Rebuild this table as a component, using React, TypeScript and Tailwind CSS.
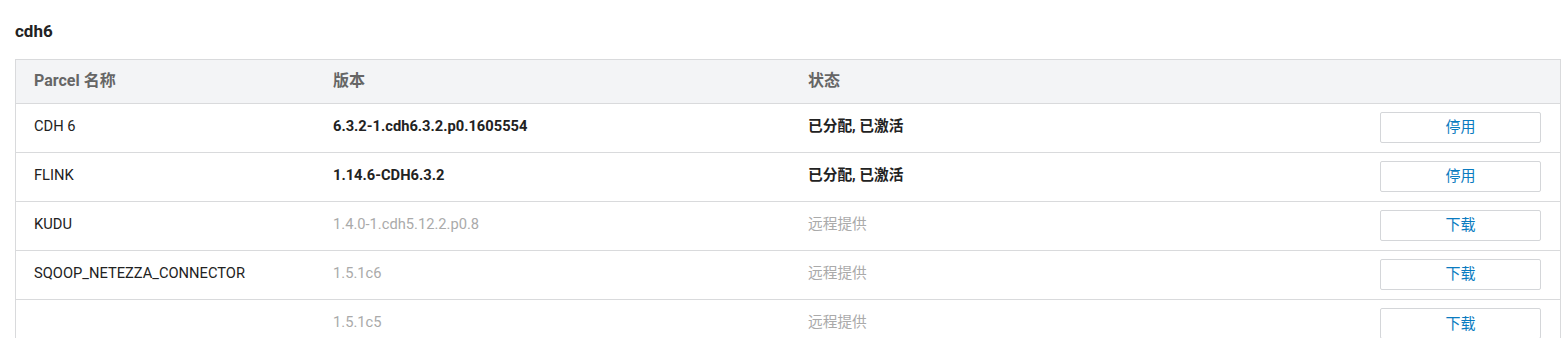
import React from 'react';

type Parcel = {
  name: string;
  version: string;
  status: string;
  active: boolean;
  action: string;
};

const parcels: Parcel[] = [
  { name: 'CDH 6', version: '6.3.2-1.cdh6.3.2.p0.1605554', status: '已分配, 已激活', active: true, action: '停用' },
  { name: 'FLINK', version: '1.14.6-CDH6.3.2', status: '已分配, 已激活', active: true, action: '停用' },
  { name: 'KUDU', version: '1.4.0-1.cdh5.12.2.p0.8', status: '远程提供', active: false, action: '下载' },
  { name: 'SQOOP_NETEZZA_CONNECTOR', version: '1.5.1c6', status: '远程提供', active: false, action: '下载' },
  { name: '', version: '1.5.1c5', status: '远程提供', active: false, action: '下载' },
];

export default function App() {
  return (
    <div
      className="w-full h-[338px] overflow-hidden bg-white text-[14.7px] text-[#222]"
      style={{ fontFamily: 'Roboto, "Noto Sans CJK SC", sans-serif' }}
    >
      <h2 className="pl-[15px] pt-[20px] h-[59px] text-[17px] font-bold text-[#222] leading-[22px]">cdh6</h2>

      <div className="ml-[15px] mr-[2px] border border-[#d9dadc]">
        <table className="w-full table-fixed border-collapse">
          <colgroup>
            <col className="w-[299px]" />
            <col className="w-[475px]" />
            <col />
            <col className="w-[180px]" />
          </colgroup>
          <thead>
            <tr className="h-[43px] bg-[#f3f4f6] text-left text-[#666] text-[16px]">
              <th className="pl-[18px] font-bold">Parcel 名称</th>
              <th className="pl-[18px] font-bold">版本</th>
              <th className="pl-[18px] font-bold">状态</th>
              <th />
            </tr>
          </thead>
          <tbody>
            {parcels.map((p, i) => (
              <tr key={i} className="h-[49px] border-t border-[#d9dadc]">
                <td className="pl-[18px] pb-[3px] text-[#222]">{p.name}</td>
                <td className={`pl-[18px] pb-[3px] ${p.active ? 'font-bold text-[#222]' : 'text-[#aaa]'}`}>{p.version}</td>
                <td className={`pl-[18px] pb-[3px] ${p.active ? 'font-bold text-[#222]' : 'text-[#aaa]'}`}>{p.status}</td>
                <td className="pr-[19px] text-right">
                  <button className="inline-flex items-center justify-center w-[161px] h-[31px] rounded-[2px] border border-[#d4d6d9] bg-white text-[#0a7bc0] text-[15px]">
                    {p.action}
                  </button>
                </td>
              </tr>
            ))}
          </tbody>
        </table>
      </div>
    </div>
  );
}
